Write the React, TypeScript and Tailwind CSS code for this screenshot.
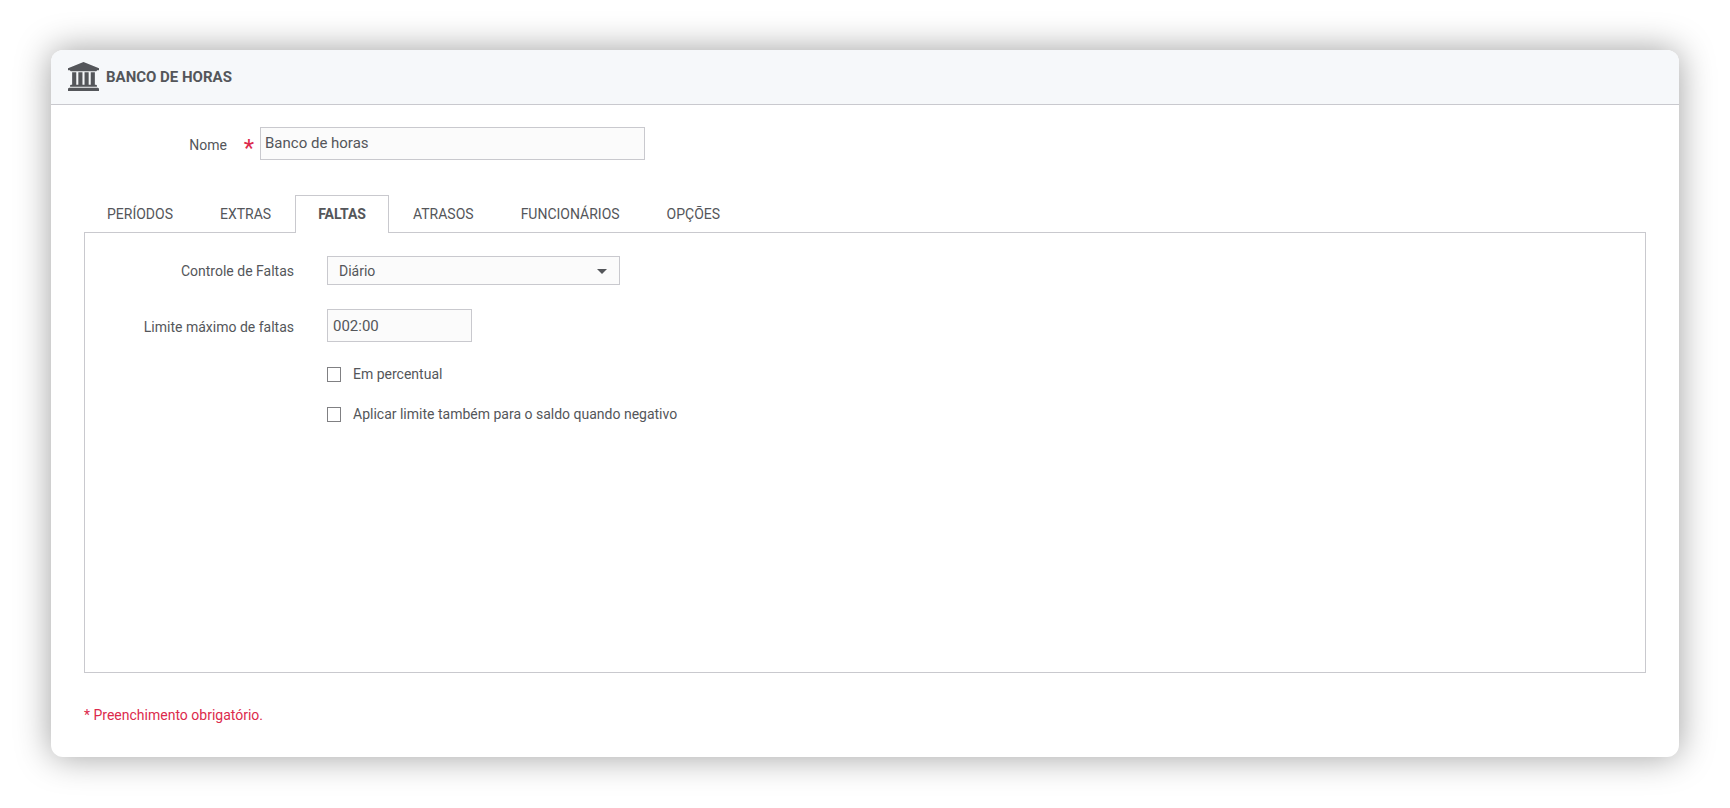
import { useState } from 'react'
import type { ReactNode } from 'react'

const TABS = [
  { id: 'periodos', label: 'PERÍODOS' },
  { id: 'extras', label: 'EXTRAS' },
  { id: 'faltas', label: 'FALTAS' },
  { id: 'atrasos', label: 'ATRASOS' },
  { id: 'funcionarios', label: 'FUNCIONÁRIOS' },
  { id: 'opcoes', label: 'OPÇÕES' },
]

function BankIcon() {
  return (
    <svg viewBox="0 0 1920 1792" className="w-[31px] h-[29px]" fill="currentColor" aria-hidden="true">
      <path d="M960 0l960 384v128h-128q0 26-20.5 45t-48.5 19h-1526q-28 0-48.5-19t-20.5-45h-128v-128zM256 640h256v768h128v-768h256v768h128v-768h256v768h128v-768h256v768h59q28 0 48.5 19t20.5 45v64h-1664v-64q0-26 20.5-45t48.5-19h59v-768zM1851 1600q28 0 48.5 19t20.5 45v128h-1920v-128q0-26 20.5-45t48.5-19h1782z" />
    </svg>
  )
}

function Checkbox({ id, children }: { id: string; children: ReactNode }) {
  return (
    <div className="flex items-center gap-3 h-4">
      <input
        id={id}
        type="checkbox"
        className="appearance-none w-[14px] h-[15px] border border-[#808083] bg-white checked:bg-[#54565a]"
      />
      <label htmlFor={id}>{children}</label>
    </div>
  )
}

export default function App() {
  const [activeTab, setActiveTab] = useState('faltas')
  const [nome, setNome] = useState('Banco de horas')
  const [limite, setLimite] = useState('002:00')

  return (
    <div className="px-[51px] py-[50px] bg-white font-[Roboto,sans-serif] text-sm text-[#54565a]">
      <div className="rounded-xl overflow-hidden bg-white shadow-[0_0_35px_rgba(0,0,0,0.38)]">
        {/* Header */}
        <header className="flex items-center gap-[7px] h-[55px] px-[17px] pb-px bg-[#f6f8fa] border-b border-[#c9c9ce]">
          <BankIcon />
          <h1 className="pt-[2px] text-[15px] font-bold">BANCO DE HORAS</h1>
        </header>

        <form className="px-[33px] pt-[22px] pb-8" onSubmit={(e) => e.preventDefault()}>
          <div className="flex items-center">
            <label htmlFor="nome" className="w-[143px] pt-[2px] text-right">
              Nome
            </label>
            <span className="w-8 pr-[5px] text-right text-2xl leading-6 pt-2 text-[#dc2a4c]">*</span>
            <input
              id="nome"
              type="text"
              value={nome}
              onChange={(e) => setNome(e.target.value)}
              className="w-[385px] h-[33px] ml-px px-1 pb-px text-[15px] bg-[#fbfbfb] border border-[#c9c9ce] outline-none"
            />
          </div>

          {/* Tabs */}
          <div role="tablist" className="flex gap-px mt-[35px]">
            {TABS.map((tab) => (
              <button
                key={tab.id}
                type="button"
                role="tab"
                aria-selected={activeTab === tab.id}
                onClick={() => setActiveTab(tab.id)}
                className={`relative h-[38px] px-[22px] pb-px border border-b-0 cursor-pointer ${
                  activeTab === tab.id
                    ? 'z-10 bg-white border-[#c9c9ce] font-bold'
                    : 'border-transparent'
                }`}
              >
                {tab.label}
              </button>
            ))}
          </div>

          <div role="tabpanel" className="-mt-px min-h-[441px] border border-[#c9c9ce] pt-[23px]">
            <div className="flex items-center">
              <label htmlFor="controle" className="w-[209px] mr-[33px] text-right">
                Controle de Faltas
              </label>
              <div className="relative">
                <select
                  id="controle"
                  defaultValue="diario"
                  className="appearance-none block w-[293px] h-[29px] px-[11px] bg-[#fbfbfb] border border-[#c9c9ce] outline-none"
                >
                  <option value="diario">Diário</option>
                  <option value="semanal">Semanal</option>
                  <option value="mensal">Mensal</option>
                </select>
                <svg
                  viewBox="0 0 10 5"
                  className="absolute right-[13px] top-[13px] w-[10px] h-[5px] pointer-events-none"
                  fill="currentColor"
                >
                  <path d="M0 0h10L5 5z" />
                </svg>
              </div>
            </div>

            <div className="flex items-center mt-6">
              <label htmlFor="limite" className="w-[209px] mr-[33px] pt-[2px] text-right">
                Limite máximo de faltas
              </label>
              <input
                id="limite"
                type="text"
                value={limite}
                onChange={(e) => setLimite(e.target.value)}
                className="w-[145px] h-[33px] px-[5px] text-[15px] bg-[#fbfbfb] border border-[#c9c9ce] outline-none"
              />
            </div>

            <div className="flex flex-col gap-6 ml-[242px] mt-6">
              <Checkbox id="percentual">Em percentual</Checkbox>
              <Checkbox id="negativo">Aplicar limite também para o saldo quando negativo</Checkbox>
            </div>
          </div>

          <p className="mt-8 text-[#dc2a4c]">* Preenchimento obrigatório.</p>
        </form>
      </div>
    </div>
  )
}
